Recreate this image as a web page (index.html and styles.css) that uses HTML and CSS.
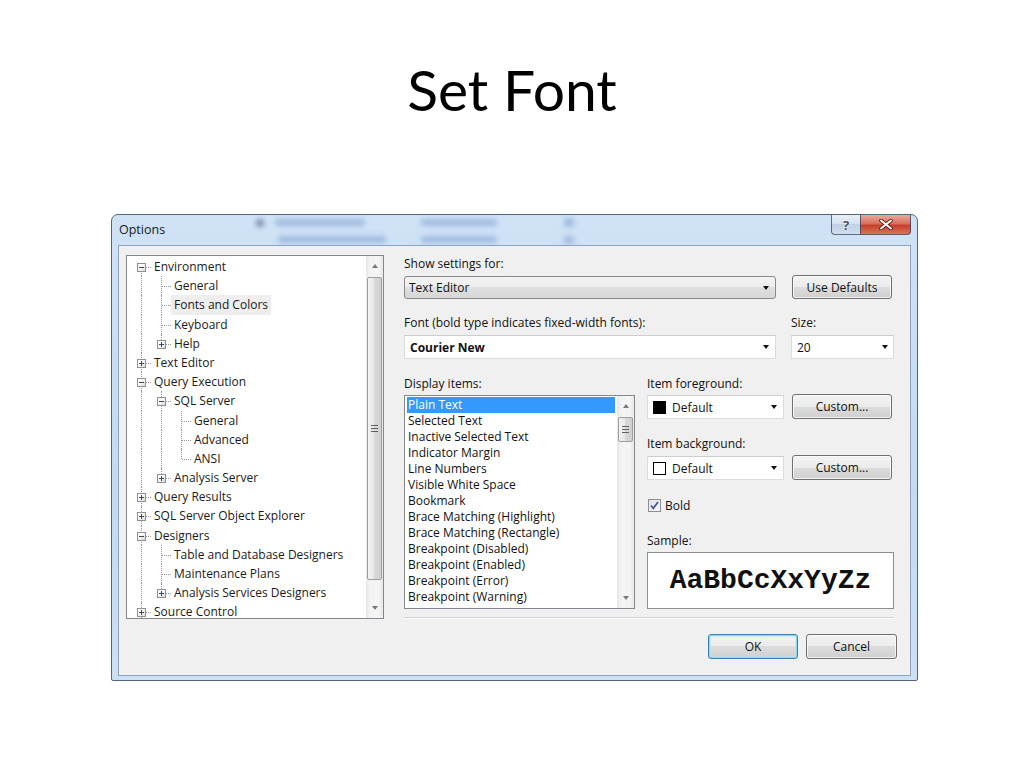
FILE: index.html
```html
<!DOCTYPE html>
<html lang="en">
<head>
  <meta charset="UTF-8">
  <meta name="viewport" content="width=device-width, initial-scale=1.0">
  <title>Set Font</title>
  <link rel="stylesheet" href="styles.css">
</head>
<body>
  <h1 class="slide-title">Set Font</h1>

  <div class="dialog">
    <div class="titlebar">
      <div class="glass">
        <span class="blob dot"></span>
        <span class="blob b1"></span>
        <span class="blob b2"></span>
        <span class="blob b3"></span>
        <span class="blob b4"></span>
        <span class="blob b5"></span>
        <span class="blob b6"></span>
      </div>
      <span class="caption">Options</span>
      <div class="caption-btns">
        <span class="cap-btn help">?</span>
        <span class="cap-btn close">
          <svg width="14" height="11" viewBox="0 0 14 11">
            <path d="M2 1.5 L12 9.5 M12 1.5 L2 9.5" stroke="#5a1d16" stroke-width="3.6" stroke-linecap="round"/>
            <path d="M2 1.5 L12 9.5 M12 1.5 L2 9.5" stroke="#fff" stroke-width="2" stroke-linecap="round"/>
          </svg>
        </span>
      </div>
    </div>

    <div class="client">
      <div class="main">
        <!-- category tree -->
        <div class="tree">
          <div class="tree-items">
            <div class="row"><span class="c f"><span class="bx"></span></span><span class="tx">Environment</span></div>
            <div class="row"><span class="c i"></span><span class="c t"></span><span class="tx">General</span></div>
            <div class="row"><span class="c i"></span><span class="c t"></span><span class="tx hl">Fonts and Colors</span></div>
            <div class="row"><span class="c i"></span><span class="c t"></span><span class="tx">Keyboard</span></div>
            <div class="row"><span class="c i"></span><span class="c l"><span class="bx plus"></span></span><span class="tx">Help</span></div>
            <div class="row"><span class="c t"><span class="bx plus"></span></span><span class="tx">Text Editor</span></div>
            <div class="row"><span class="c t"><span class="bx"></span></span><span class="tx">Query Execution</span></div>
            <div class="row"><span class="c i"></span><span class="c t"><span class="bx"></span></span><span class="tx">SQL Server</span></div>
            <div class="row"><span class="c i"></span><span class="c i"></span><span class="c t"></span><span class="tx">General</span></div>
            <div class="row"><span class="c i"></span><span class="c i"></span><span class="c t"></span><span class="tx">Advanced</span></div>
            <div class="row"><span class="c i"></span><span class="c i"></span><span class="c l"></span><span class="tx">ANSI</span></div>
            <div class="row"><span class="c i"></span><span class="c l"><span class="bx plus"></span></span><span class="tx">Analysis Server</span></div>
            <div class="row"><span class="c t"><span class="bx plus"></span></span><span class="tx">Query Results</span></div>
            <div class="row"><span class="c t"><span class="bx plus"></span></span><span class="tx">SQL Server Object Explorer</span></div>
            <div class="row"><span class="c t"><span class="bx"></span></span><span class="tx">Designers</span></div>
            <div class="row"><span class="c i"></span><span class="c t"></span><span class="tx">Table and Database Designers</span></div>
            <div class="row"><span class="c i"></span><span class="c t"></span><span class="tx">Maintenance Plans</span></div>
            <div class="row"><span class="c i"></span><span class="c l"><span class="bx plus"></span></span><span class="tx">Analysis Services Designers</span></div>
            <div class="row"><span class="c t"><span class="bx plus"></span></span><span class="tx">Source Control</span></div>
          </div>
          <div class="sb">
            <div class="sb-arrow up"></div>
            <div class="sb-track"><div class="sb-thumb"><span class="grip"></span></div></div>
            <div class="sb-arrow down"></div>
          </div>
        </div>

        <!-- settings -->
        <div class="settings">
          <div class="label">Show settings for:</div>
          <div class="line first">
            <div class="combo ddl wide"><span>Text Editor</span><span class="arr"></span></div>
            <button class="btn defaults">Use Defaults</button>
          </div>

          <div class="line second">
            <div class="group font-group">
              <div class="label">Font (bold type indicates fixed-width fonts):</div>
              <div class="combo edit wide"><span class="bold">Courier New</span><span class="arr"></span></div>
            </div>
            <div class="group size-group">
              <div class="label">Size:</div>
              <div class="combo edit size"><span>20</span><span class="arr"></span></div>
            </div>
          </div>

          <div class="line third">
            <div class="group">
              <div class="label">Display items:</div>
              <div class="listbox">
                <div class="list-items">
                  <div class="li sel">Plain Text</div>
                  <div class="li">Selected Text</div>
                  <div class="li">Inactive Selected Text</div>
                  <div class="li">Indicator Margin</div>
                  <div class="li">Line Numbers</div>
                  <div class="li">Visible White Space</div>
                  <div class="li">Bookmark</div>
                  <div class="li">Brace Matching (Highlight)</div>
                  <div class="li">Brace Matching (Rectangle)</div>
                  <div class="li">Breakpoint (Disabled)</div>
                  <div class="li">Breakpoint (Enabled)</div>
                  <div class="li">Breakpoint (Error)</div>
                  <div class="li">Breakpoint (Warning)</div>
                </div>
                <div class="sb">
                  <div class="sb-arrow up"></div>
                  <div class="sb-track"><div class="sb-thumb"><span class="grip"></span></div></div>
                  <div class="sb-arrow down"></div>
                </div>
              </div>
            </div>

            <div class="group colors">
              <div class="label">Item foreground:</div>
              <div class="pick">
                <div class="combo edit color"><span class="swatch black"></span><span>Default</span><span class="arr"></span></div>
                <button class="btn custom">Custom...</button>
              </div>
              <div class="label gap">Item background:</div>
              <div class="pick">
                <div class="combo edit color"><span class="swatch white"></span><span>Default</span><span class="arr"></span></div>
                <button class="btn custom">Custom...</button>
              </div>
              <div class="check-row">
                <span class="checkbox">
                  <svg width="11" height="11" viewBox="0 0 11 11"><path d="M2 5.5 L4.3 8.3 L9 2" fill="none" stroke="#3f5487" stroke-width="1.7"/></svg>
                </span>
                <span>Bold</span>
              </div>
              <div class="label sample-label">Sample:</div>
              <div class="sample">AaBbCcXxYyZz</div>
            </div>
          </div>

          <div class="separator"></div>
        </div>
      </div>

      <div class="actions">
        <button class="btn ok">OK</button>
        <button class="btn cancel">Cancel</button>
      </div>
    </div>
  </div>
</body>
</html>
```

FILE: styles.css
```css
body {
  margin: 0;
  background: #fff;
}

.slide-title {
  margin: 61px 0 0;
  font-family: Lato, "Open Sans", sans-serif;
  font-weight: 400;
  font-size: 57px;
  line-height: 57px;
  text-align: center;
  color: #000;
}

/* window frame */
.dialog {
  box-sizing: border-box;
  width: 807px;
  height: 467px;
  margin: 96px 0 0 111px;
  padding: 0 6px 4px;
  border: 1px solid #55657a;
  border-radius: 7px 7px 2px 2px;
  background: linear-gradient(#cfe2f6, #c3daf1 60%, #cce0f4);
  font-family: "Open Sans", "Noto Sans", sans-serif;
  font-size: 12px;
  color: #111;
}

.titlebar {
  position: relative;
  display: flex;
  align-items: flex-start;
  height: 30px;
}

.glass {
  position: absolute;
  inset: 0;
  overflow: hidden;
}

.blob {
  position: absolute;
  height: 7px;
  border-radius: 3px;
  background: rgba(95, 135, 190, 0.4);
  filter: blur(2.4px);
}

.blob.dot { left: 138px; top: 4px; width: 8px; height: 8px; background: rgba(50, 70, 110, 0.5); }
.blob.b1 { left: 157px; top: 4px; width: 90px; }
.blob.b2 { left: 160px; top: 21px; width: 108px; }
.blob.b3 { left: 303px; top: 4px; width: 76px; }
.blob.b4 { left: 303px; top: 21px; width: 76px; }
.blob.b5 { left: 446px; top: 3px; width: 10px; height: 9px; }
.blob.b6 { left: 446px; top: 21px; width: 10px; height: 8px; }

.caption {
  position: relative;
  padding-left: 1px;
  line-height: 30px;
  font-size: 12.5px;
  color: #1a1a1a;
}

.caption-btns {
  position: relative;
  display: flex;
  margin-left: auto;
}

.cap-btn {
  box-sizing: border-box;
  display: flex;
  align-items: center;
  justify-content: center;
  height: 20px;
  border: 1px solid rgba(50, 65, 90, 0.75);
  border-top: none;
}

.cap-btn.help {
  width: 29px;
  border-right: none;
  border-radius: 0 0 0 4px;
  background: linear-gradient(#e9f0f8, #d3e0ee 50%, #c0d1e4 50%, #cfdeee);
  color: #4a5666;
  font-size: 13px;
  font-weight: 700;
  text-shadow: 0 0 2px #fff;
}

.cap-btn.close {
  width: 51px;
  border-radius: 0 0 4px 0;
  background: linear-gradient(#e9a99b, #d8705e 45%, #c6402d 55%, #d8745a);
}

/* client area */
.client {
  box-sizing: border-box;
  height: 431px;
  border: 1px solid #8ea3bc;
  background: #f0f0f0;
}

.main {
  display: flex;
  padding: 9px 0 0 7px;
}

/* tree */
.tree {
  box-sizing: border-box;
  display: flex;
  width: 258px;
  height: 364px;
  border: 1px solid #828790;
  background: #fff;
}

.tree-items {
  flex: 1;
  overflow: hidden;
  padding: 1px 0 0 4px;
}

.row {
  display: flex;
  height: 19.2px;
  line-height: 19.2px;
  white-space: nowrap;
}

.c {
  position: relative;
  flex: 0 0 20px;
  height: 19.2px;
}

.c::before,
.c::after {
  content: "";
  position: absolute;
}

.c.i::before,
.c.t::before {
  left: 10px;
  top: 0;
  bottom: 0;
  border-left: 1px dotted #9a9a9a;
}

.c.l::before {
  left: 10px;
  top: 0;
  height: 10px;
  border-left: 1px dotted #9a9a9a;
}

.c.f::before {
  left: 10px;
  top: 10px;
  bottom: 0;
  border-left: 1px dotted #9a9a9a;
}

.c.t::after,
.c.l::after,
.c.f::after {
  left: 11px;
  right: 0;
  top: 10px;
  border-top: 1px dotted #9a9a9a;
}

.bx {
  position: absolute;
  z-index: 1;
  left: 6px;
  top: 6px;
  box-sizing: border-box;
  width: 9px;
  height: 9px;
  border: 1px solid #919191;
  background: linear-gradient(135deg, #fff 30%, #d9d9d9);
}

.bx::before {
  content: "";
  position: absolute;
  left: 1px;
  top: 3px;
  width: 5px;
  height: 1px;
  background: #3c4a5e;
}

.bx.plus::after {
  content: "";
  position: absolute;
  left: 3px;
  top: 1px;
  width: 1px;
  height: 5px;
  background: #3c4a5e;
}

.tx {
  padding: 0 3px;
  color: #1a1a1a;
}

.tx.hl {
  background: #eeeeee;
}

/* scrollbars */
.sb {
  display: flex;
  flex-direction: column;
  flex: 0 0 17px;
  background: linear-gradient(90deg, #e7e7e7, #f4f4f4 25%, #f4f4f4 75%, #e7e7e7);
}

.sb-arrow {
  display: flex;
  align-items: center;
  justify-content: center;
  height: 20px;
}

.sb-arrow::before {
  content: "";
  border-left: 3.5px solid transparent;
  border-right: 3.5px solid transparent;
}

.sb-arrow.up::before {
  border-bottom: 4px solid #7a7a7a;
}

.sb-arrow.down::before {
  border-top: 4px solid #7a7a7a;
}

.sb-track {
  flex: 1;
  padding-top: 1px;
}

.sb-thumb {
  box-sizing: border-box;
  display: flex;
  align-items: center;
  justify-content: center;
  margin: 0 1px;
  border: 1px solid #9d9d9d;
  border-radius: 2px;
  background: linear-gradient(90deg, #f3f3f3, #e6e6e6 50%, #d9d9d9 50%, #d0d0d0);
}

.tree .sb-thumb {
  height: 303px;
}

.grip {
  width: 7px;
  height: 7px;
  background: repeating-linear-gradient(#5f5f5f 0 1px, transparent 1px 3px);
}

/* settings column */
.settings {
  display: flex;
  flex-direction: column;
  width: 490px;
  margin: 1px 0 0 20px;
}

.label {
  height: 15px;
  line-height: 15px;
  white-space: nowrap;
}

.line {
  display: flex;
  align-items: flex-start;
}

.line.first {
  margin-top: 4px;
}

.line.second {
  margin-top: 16px;
}

.line.third {
  margin-top: 17px;
}

.group {
  display: flex;
  flex-direction: column;
}

.size-group {
  margin-left: 15px;
}

.combo {
  box-sizing: border-box;
  display: flex;
  align-items: center;
  height: 24px;
  padding: 0 6px 0 4px;
  white-space: nowrap;
}

.combo .arr {
  margin-left: auto;
  border-left: 3.5px solid transparent;
  border-right: 3.5px solid transparent;
  border-top: 4px solid #111;
}

.combo.wide {
  width: 372px;
}

.combo.ddl {
  height: 23px;
  margin-top: 1px;
  border: 1px solid #8a8a8a;
  border-radius: 3px;
  background: linear-gradient(#f4f4f4, #ececec 50%, #e0e0e0 50%, #d6d6d6);
}

.combo.edit {
  margin-top: 5px;
  border: 1px solid #dcdcdc;
  border-top-color: #cdcdcd;
  background: #fff;
  padding-left: 5px;
}

.combo.size {
  width: 103px;
  padding-right: 5px;
}

.bold {
  font-weight: 700;
}

.btn {
  box-sizing: border-box;
  height: 24px;
  padding: 0;
  border: 1px solid #707070;
  border-radius: 3px;
  background: linear-gradient(#f3f3f3, #ebebeb 50%, #dddddd 50%, #cfcfcf);
  box-shadow: inset 0 0 0 1px rgba(255, 255, 255, 0.7);
  font-family: inherit;
  font-size: 12px;
  color: #111;
}

.btn.defaults {
  width: 100px;
  margin-left: 16px;
}

/* display items */
.listbox {
  box-sizing: border-box;
  display: flex;
  width: 231px;
  height: 214px;
  margin-top: 4px;
  border: 1px solid #828790;
  background: #fff;
}

.list-items {
  flex: 1;
  overflow: hidden;
  padding: 1px 2px 0 2px;
}

.li {
  height: 16px;
  line-height: 16px;
  padding-left: 1px;
  white-space: nowrap;
}

.li.sel {
  background: #3399ff;
  color: #fff;
}

.listbox .sb-thumb {
  height: 25px;
}

/* colour pickers */
.colors {
  width: 247px;
  margin-left: 12px;
}

.pick {
  display: flex;
  align-items: flex-start;
  margin-top: 3px;
}

.label.gap {
  margin-top: 17px;
}

.pick + .label.gap + .pick {
  margin-top: 4px;
}

.combo.color {
  width: 137px;
  margin-top: 1px;
}

.swatch {
  box-sizing: border-box;
  width: 13px;
  height: 13px;
  margin-right: 6px;
  border: 1px solid #000;
}

.swatch.black {
  background: #000;
}

.swatch.white {
  background: #fff;
}

.btn.custom {
  width: 100px;
  height: 25px;
  margin-left: 8px;
}

.check-row {
  display: flex;
  align-items: center;
  gap: 4px;
  height: 16px;
  margin-top: 17px;
}

.checkbox {
  box-sizing: border-box;
  display: flex;
  align-items: center;
  justify-content: center;
  width: 13px;
  height: 13px;
  margin-left: 1px;
  border: 1px solid #8e8f8f;
  background: linear-gradient(135deg, #dfe1ec, #f6f7fb);
}

.sample-label {
  margin-top: 20px;
}

.sample {
  box-sizing: border-box;
  display: flex;
  align-items: center;
  justify-content: center;
  height: 57px;
  margin-top: 4px;
  border: 1px solid #8f8f8f;
  background: #fff;
  font-family: "Liberation Mono", "Courier New", monospace;
  font-weight: 700;
  font-size: 28px;
  color: #111;
}

.separator {
  margin-top: 8px;
  border-top: 1px solid #d3d3d3;
  border-bottom: 1px solid #fff;
}

/* dialog buttons */
.actions {
  display: flex;
  justify-content: flex-end;
  gap: 8px;
  margin-top: 15px;
  padding-right: 13px;
}

.btn.ok,
.btn.cancel {
  height: 25px;
}

.btn.ok {
  width: 90px;
  border-color: #3c7fb1;
  box-shadow: inset 0 0 0 1px #8fd6f3, inset 0 0 0 2px rgba(180, 230, 250, 0.6);
}

.btn.cancel {
  width: 91px;
}
```
